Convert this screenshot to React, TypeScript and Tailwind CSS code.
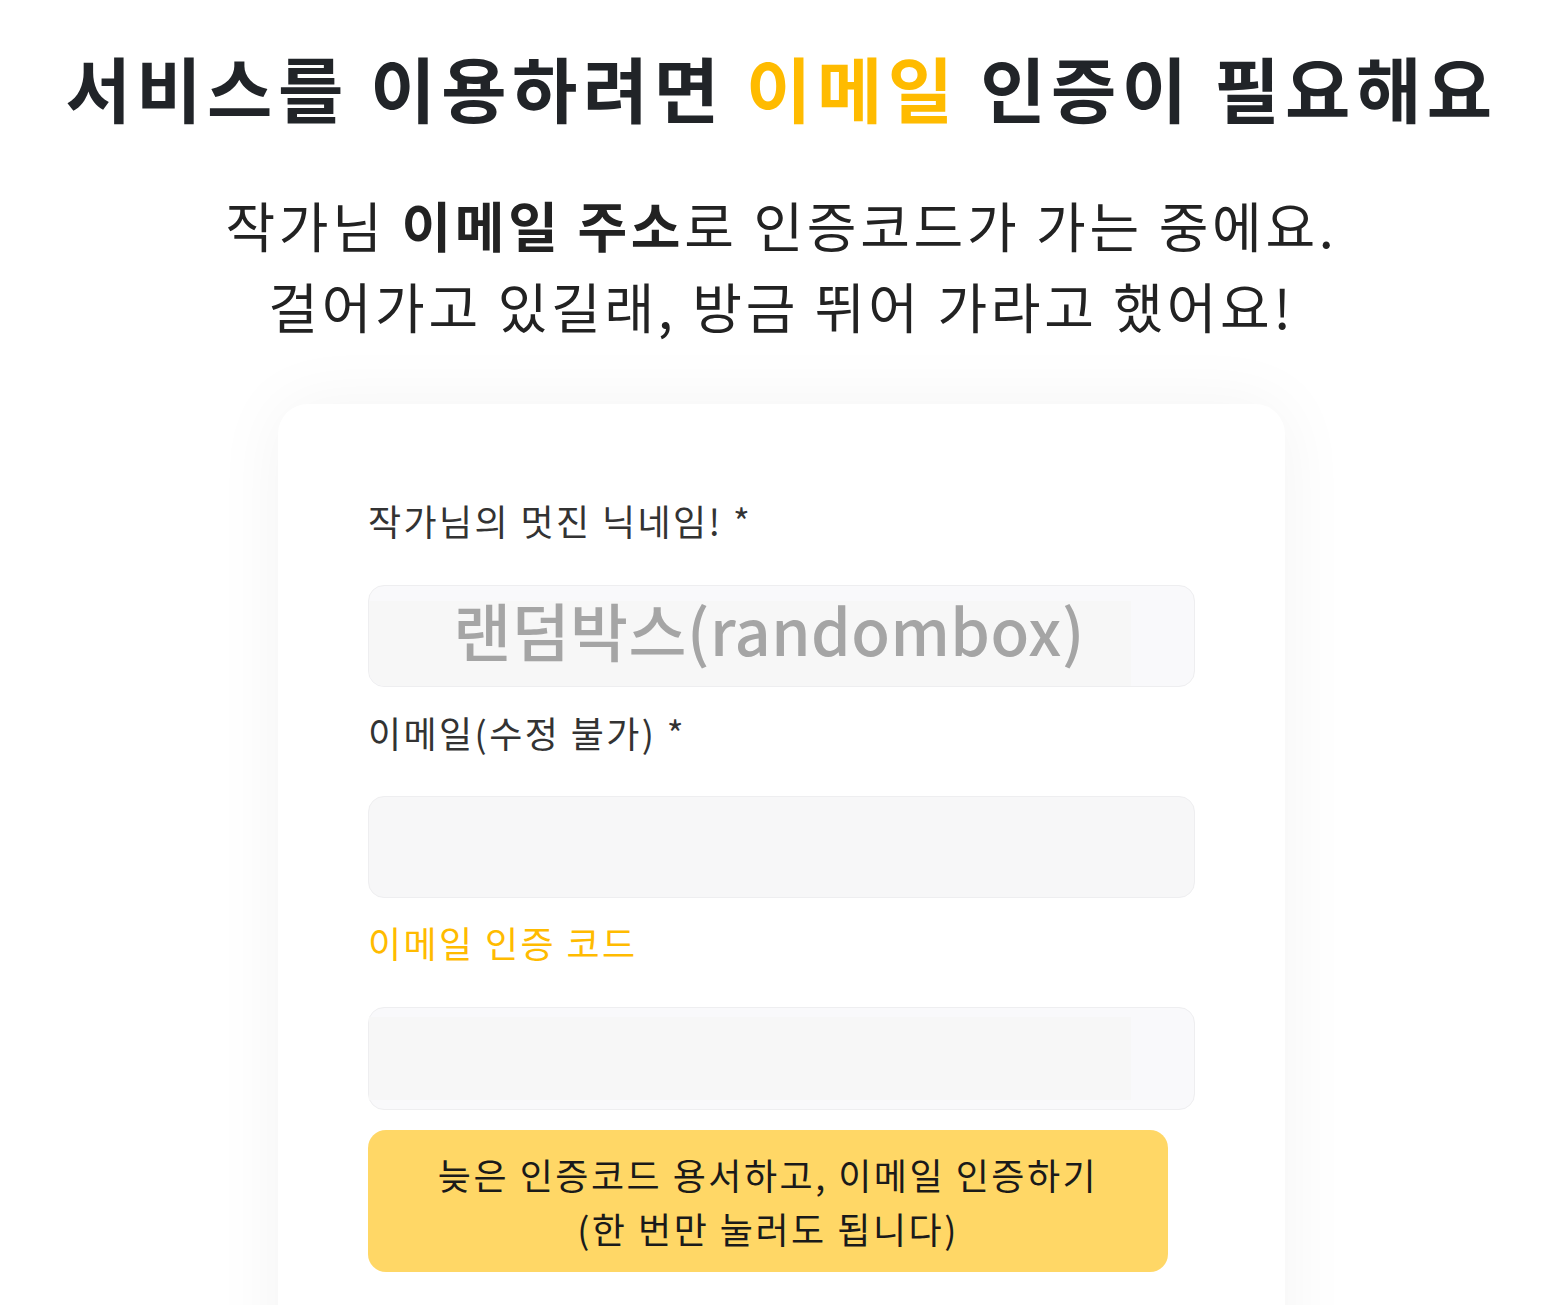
const fieldLabel = "text-[36px] leading-[54px] tracking-[2.4px] text-[#333333]";

const App = () => {
  return (
    <div
      className="min-h-screen bg-white flex flex-col items-center overflow-hidden"
      style={{ fontFamily: '"Noto Sans CJK KR", "Noto Sans", sans-serif' }}
    >
      <h1 className="pt-[43px] text-[71px] leading-[86px] font-bold tracking-[5.5px] text-[#212428] whitespace-nowrap">
        서비스를 이용하려면 <span className="text-[#ffbb00]">이메일</span> 인증이 필요해요
      </h1>

      <p className="mt-[55px] text-[54px] leading-[81px] tracking-[3.7px] text-[#222222] text-center">
        작가님 <strong className="font-bold">이메일 주소</strong>로 인증코드가 가는 중에요.
        <br />
        걸어가고 있길래, 방금 뛰어 가라고 했어요!
      </p>

      <div className="mt-[58px] w-[1007px] rounded-[30px] bg-white shadow-[0_0_70px_rgba(0,0,0,0.05)] px-[90px] pt-[89px] pb-[120px]">
        <div className={fieldLabel}>작가님의 멋진 닉네임! *</div>
        <div className="mt-[38px] h-[102px] rounded-[16px] border border-[#eeeef0] bg-[#f9f9fb] flex items-end">
          <div className="h-[85px] w-[762px] bg-[#f7f7f7] rounded-bl-[16px] flex items-center justify-center">
            <span className="ml-[38px] mb-[30px] text-[63px] font-medium tracking-[0.5px] text-[#a5a5a5] leading-none">
              랜덤박스(randombox)
            </span>
          </div>
        </div>

        <div className={`mt-[18px] ${fieldLabel}`}>이메일(수정 불가) *</div>
        <div className="mt-[37px] h-[102px] rounded-[16px] border border-[#eeeef0] bg-[#f7f7f8]" />

        <div className="mt-[17px] text-[36px] leading-[54px] tracking-[2.4px] text-[#ffbb00]">이메일 인증 코드</div>
        <div className="mt-[38px] h-[103px] rounded-[16px] border border-[#eeeef0] bg-[#f9f9fb] flex items-center">
          <div className="h-[83px] w-[762px] bg-[#f7f7f7]" />
        </div>

        <button
          type="button"
          className="mt-[20px] w-[800px] h-[142px] rounded-[18px] bg-[#ffd766] text-[36px] leading-[54px] tracking-[2.5px] text-[#1a1a1a]"
        >
          늦은 인증코드 용서하고, 이메일 인증하기
          <br />
          (한 번만 눌러도 됩니다)
        </button>
      </div>
    </div>
  );
};

export default App;
